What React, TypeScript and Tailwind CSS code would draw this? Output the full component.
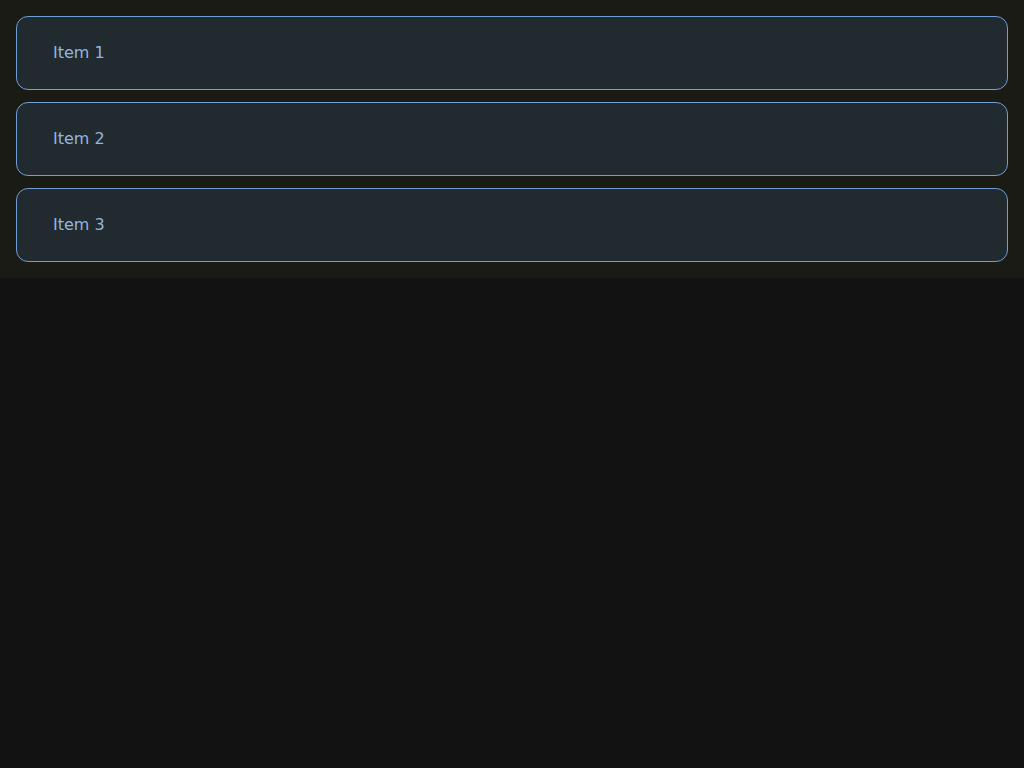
export default function App() {
  const items = ['Item 1', 'Item 2', 'Item 3'];
  return (
    <div className="min-h-screen bg-[#121212]" style={{ fontFamily: '"DejaVu Sans", sans-serif' }}>
      <div className="flex flex-col gap-3 bg-[#1b1b16] p-4">
        {items.map((item) => (
          <div
            key={item}
            className="rounded-xl border border-[#6f9fd6] bg-[#212a2e] px-9 py-6 text-base leading-6 text-[#92b6de]"
          >
            {item}
          </div>
        ))}
      </div>
    </div>
  );
}
